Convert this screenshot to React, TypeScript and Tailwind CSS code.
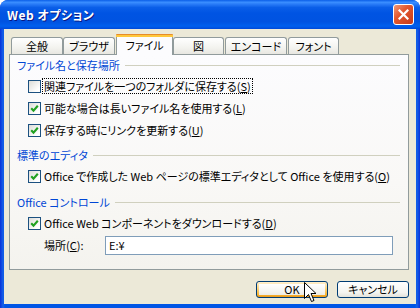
import React from "react";

function Check({ checked }: { checked: boolean }) {
  return (
    <span className="w-[13px] h-[13px] border border-[#1c5180] bg-[linear-gradient(135deg,#dcdcd7,#ffffff_80%)] flex items-center justify-center shrink-0">
      {checked && (
        <svg width="9" height="9" viewBox="0 0 9 9">
          <path d="M1.2 4.2 L3.5 6.6 L7.8 1.8" stroke="#21a121" strokeWidth="2.1" fill="none" />
        </svg>
      )}
    </span>
  );
}

function Group({ title, mt }: { title: string; mt: string }) {
  return (
    <div className={`h-[20px] flex items-center pl-[7px] pr-[8px] ${mt}`}>
      <span className="text-[#0046d5] whitespace-nowrap">{title}</span>
      <div className="flex-1 h-px bg-[#d0d0bf] ml-[5px]" />
    </div>
  );
}

function Row({ checked, children, focus }: { checked: boolean; children: React.ReactNode; focus?: boolean }) {
  return (
    <div className="h-[22px] flex items-center pl-[18px]">
      <Check checked={checked} />
      <span
        className={`ml-[1px] px-[1px] whitespace-nowrap leading-[14px] border border-dotted ${
          focus ? "border-black" : "border-transparent"
        }`}
      >
        {children}
      </span>
    </div>
  );
}

function Tab({ label, w, ml, selected }: { label: string; w: string; ml: string; selected?: boolean }) {
  if (selected) {
    return (
      <div
        className={`relative z-10 ${w} ${ml} h-[21px] mb-[-1px] bg-[#fcfcfe] border-x border-[#919b9c] rounded-t-[3px] flex flex-col`}
      >
        <div className="h-[1px] bg-[#e68b2c] rounded-t-[3px] mx-[-1px]" />
        <div className="h-[2px] bg-[#ffc83c] mx-[-1px]" />
        <div className="flex-1 flex items-center justify-center pb-[1px]">{label}</div>
      </div>
    );
  }
  return (
    <div
      className={`${w} ${ml} h-[17px] border-x border-t border-[#919b9c] rounded-t-[3px] bg-[linear-gradient(to_bottom,#ffffff,#f3f3ef_60%,#e8e7e1)] flex items-center justify-center`}
    >
      {label}
    </div>
  );
}

export default function App() {
  return (
    <div className="w-[420px] h-[308px] bg-white relative overflow-hidden font-['Noto_Sans_CJK_JP',sans-serif] text-[11px] text-black [font-feature-settings:'palt']">
      <div className="w-full h-full flex flex-col rounded-t-[8px] bg-[linear-gradient(to_right,#0831d9,#1660e8_3px,#0055e5_5px,#0055e5_calc(100%-5px),#1660e8_calc(100%-3px),#0831d9)]">
        {/* Title bar */}
        <div className="h-[29px] shrink-0 flex items-center rounded-t-[8px] bg-[linear-gradient(to_bottom,#0a5ee8_0%,#3a8eff_8%,#2a7cf8_14%,#0a5ee8_26%,#0054e3_45%,#0053e1_75%,#0060ee_90%,#0049d8_100%)]">
          <span className="ml-[7px] text-white font-bold text-[12px] leading-none [text-shadow:1px_1px_#0a1883] tracking-[0.5px]">
            Web オプション
          </span>
          <div className="ml-auto mr-[6px] w-[21px] h-[21px] rounded-[3px] border border-white bg-[linear-gradient(135deg,#f09a7a,#e2582f_40%,#c83a1a)] flex items-center justify-center">
            <svg width="11" height="11" viewBox="0 0 11 11">
              <path d="M1.5 1.5 L9.5 9.5 M9.5 1.5 L1.5 9.5" stroke="white" strokeWidth="2.2" strokeLinecap="square" />
            </svg>
          </div>
        </div>

        {/* Client */}
        <div className="flex-1 mx-[4px] mb-[4px] bg-[#ece9d8] flex flex-col">
          <div className="h-[25px] pt-[5px] pl-[7px] flex items-end">
            <Tab label="全般" w="w-[52px]" ml="ml-0" />
            <Tab label="ブラウザ" w="w-[52px]" ml="ml-0" />
            <Tab label="ファイル" w="w-[57px]" ml="ml-[1px]" selected />
            <Tab label="図" w="w-[51px]" ml="ml-0" />
            <Tab label="エンコード" w="w-[62px]" ml="ml-[1px]" />
            <Tab label="フォント" w="w-[51px]" ml="ml-[1px]" />
          </div>

          <div className="ml-[5px] mr-[7px] h-[216px] border border-[#919b9c] bg-[linear-gradient(to_bottom,#fcfcfe,#f9f8f6_60%,#f4f3ee)] flex flex-col">
            <Group title="ファイル名と保存場所" mt="mt-0" />
            <Row checked={false} focus>
              関連ファイルを一つのフォルダに保存する(<span className="underline">S</span>)
            </Row>
            <Row checked>
              可能な場合は長いファイル名を使用する(<span className="underline">L</span>)
            </Row>
            <Row checked>
              保存する時にリンクを更新する(<span className="underline">U</span>)
            </Row>

            <Group title="標準のエディタ" mt="mt-[4px]" />
            <Row checked>
              Office で作成した Web ページの標準エディタとして Office を使用する(<span className="underline">O</span>)
            </Row>

            <Group title="Office コントロール" mt="mt-[5px]" />
            <Row checked>
              Office Web コンポーネントをダウンロードする(<span className="underline">D</span>)
            </Row>
            <div className="h-[23px] flex items-center pl-[34px] pr-[15px]">
              <span className="w-[61px] whitespace-nowrap">
                場所(<span className="underline">C</span>):
              </span>
              <div className="flex-1 h-[19px] border border-[#7f9db9] bg-white flex items-center pl-[3px]">
                E:¥
              </div>
            </div>
          </div>

          <div className="mt-[11px] pr-[7px] flex justify-end gap-[9px]">
            <div className="w-[72px] h-[17px] rounded-[3px] border border-[#003c74] bg-[linear-gradient(to_bottom,#fff0cf,#fdd889_40%,#f8b330_85%,#e5971f)] p-[2px]">
              <div className="w-full h-full bg-[linear-gradient(to_bottom,#ffffff,#f4f4f0_70%,#ecebe6)] flex items-center justify-center leading-none">
                OK
              </div>
            </div>
            <div className="w-[72px] h-[17px] rounded-[3px] border border-[#003c74] bg-[linear-gradient(to_bottom,#ffffff,#f4f4f0_70%,#e3e2da)] flex items-center justify-center leading-none">
              キャンセル
            </div>
          </div>
        </div>
      </div>

      {/* Mouse cursor */}
      <svg className="absolute left-[304px] top-[282px]" width="13" height="22" viewBox="0 0 13 22">
        <path
          d="M0.5 0.5 L0.5 16.5 L4.5 12.5 L7.5 19.5 L10 18.5 L7 11.5 L12 11.5 Z"
          fill="white"
          stroke="black"
          strokeWidth="1"
          strokeLinejoin="miter"
        />
      </svg>
    </div>
  );
}
